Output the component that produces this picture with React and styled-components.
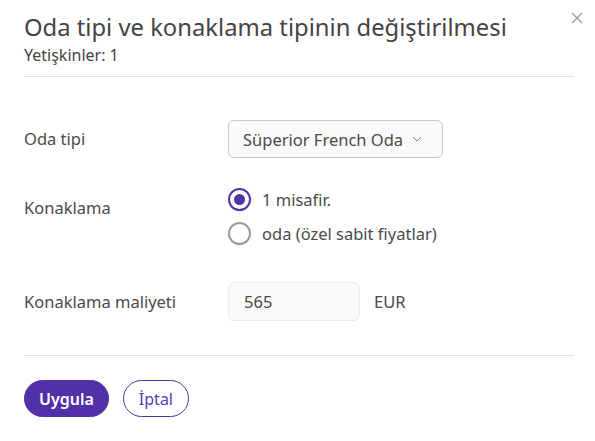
import React, { useState } from "react";
import styled, { createGlobalStyle } from "styled-components";

const GlobalStyle = createGlobalStyle`
  body {
    margin: 0;
    background: #fff;
    font-family: "Noto Sans", "Open Sans", sans-serif;
    color: #4a4a4a;
  }
`;

const Modal = styled.div`
  width: 595px;
  height: 441px;
  box-sizing: border-box;
  padding: 10px 21px 0 24px;
  position: relative;
`;

const CloseButton = styled.button`
  position: absolute;
  top: 12px;
  right: 11px;
  width: 14px;
  height: 14px;
  padding: 0;
  border: none;
  background: none;
  cursor: pointer;
`;

const Title = styled.h1`
  margin: 0;
  font-size: 23.8px;
  font-weight: 400;
  line-height: 34px;
  color: #444;
`;

const Subtitle = styled.div`
  font-size: 16px;
  line-height: 22px;
  color: #444;
`;

const Divider = styled.hr`
  border: none;
  border-top: 1px solid #e2e2e2;
  margin: ${(p) => p.$margin || "0"};
`;

const Form = styled.div`
  display: flex;
  flex-direction: column;
`;

const Row = styled.div`
  display: grid;
  grid-template-columns: 204px 1fr;
  align-items: ${(p) => p.$align || "center"};
  margin-bottom: ${(p) => p.$gap || "0"};
`;

const Label = styled.div`
  font-size: 16.5px;
  line-height: 22px;
  color: #4a4a4a;
  padding-top: ${(p) => p.$offset || "0"};
`;

const Select = styled.button`
  display: inline-flex;
  align-items: center;
  gap: 9px;
  height: 38px;
  width: 215px;
  box-sizing: border-box;
  padding: 0 14px;
  border: 1px solid #c8c8c8;
  border-radius: 6px;
  background: #fafafa;
  font-family: inherit;
  font-size: 16.5px;
  color: #4a4a4a;
  cursor: pointer;
`;

const RadioGroup = styled.div`
  display: flex;
  flex-direction: column;
  gap: 11px;
`;

const RadioLabel = styled.label`
  display: flex;
  align-items: center;
  gap: 11px;
  height: 23px;
  font-size: 16.5px;
  color: #4a4a4a;
  cursor: pointer;
`;

const RadioCircle = styled.span`
  width: 23px;
  height: 23px;
  box-sizing: border-box;
  border-radius: 50%;
  border: 2px solid ${(p) => (p.$checked ? "#5230a8" : "#9a9a9a")};
  display: flex;
  align-items: center;
  justify-content: center;
  &::after {
    content: "";
    width: 11px;
    height: 11px;
    border-radius: 50%;
    background: #5230a8;
    display: ${(p) => (p.$checked ? "block" : "none")};
  }
`;

const CostField = styled.div`
  display: flex;
  align-items: center;
  gap: 14px;
`;

const Input = styled.input`
  width: 132px;
  height: 39px;
  box-sizing: border-box;
  padding: 0 15px;
  border: 1px solid #ececec;
  border-radius: 6px;
  background: #f9f9f9;
  font-family: inherit;
  font-size: 16.5px;
  color: #4a4a4a;
  outline: none;
`;

const Currency = styled.span`
  font-size: 16.5px;
  color: #4a4a4a;
`;

const Actions = styled.div`
  display: flex;
  gap: 14px;
`;

const Button = styled.button`
  height: 37px;
  box-sizing: border-box;
  padding: 0 ${(p) => (p.$primary ? "14px" : "15px")};
  border-radius: 19px;
  border: 1px solid #5230a8;
  background: ${(p) => (p.$primary ? "#5230a8" : "#fff")};
  color: ${(p) => (p.$primary ? "#fff" : "#5a3bb5")};
  font-family: inherit;
  font-size: 16px;
  font-weight: ${(p) => (p.$primary ? 600 : 400)};
  cursor: pointer;
`;

const Chevron = () => (
  <svg width="10" height="6" viewBox="0 0 10 6" fill="none">
    <path d="M1 1l4 4 4-4" stroke="#888" strokeWidth="1" />
  </svg>
);

const App = () => {
  const [mode, setMode] = useState("guest");

  return (
    <Modal>
      <GlobalStyle />
      <CloseButton aria-label="Kapat">
        <svg width="12" height="12" viewBox="0 0 12 12">
          <path d="M1 1l10 10M11 1L1 11" stroke="#999" strokeWidth="1.2" />
        </svg>
      </CloseButton>
      <Title>Oda tipi ve konaklama tipinin değiştirilmesi</Title>
      <Subtitle>Yetişkinler: 1</Subtitle>
      <Divider $margin="10px 0 43px" />

      <Form>
        <Row $gap="30px">
          <Label>Oda tipi</Label>
          <div>
            <Select>
              Süperior French Oda <Chevron />
            </Select>
          </div>
        </Row>

        <Row $align="start" $gap="37px">
          <Label $offset="9px">Konaklama</Label>
          <RadioGroup>
            <RadioLabel onClick={() => setMode("guest")}>
              <RadioCircle $checked={mode === "guest"} />
              1 misafir.
            </RadioLabel>
            <RadioLabel onClick={() => setMode("room")}>
              <RadioCircle $checked={mode === "room"} />
              oda (özel sabit fiyatlar)
            </RadioLabel>
          </RadioGroup>
        </Row>

        <Row>
          <Label>Konaklama maliyeti</Label>
          <CostField>
            <Input defaultValue="565" />
            <Currency>EUR</Currency>
          </CostField>
        </Row>
      </Form>

      <Divider $margin="34px 0 24px" />

      <Actions>
        <Button $primary>Uygula</Button>
        <Button>İptal</Button>
      </Actions>
    </Modal>
  );
};

export default App;
